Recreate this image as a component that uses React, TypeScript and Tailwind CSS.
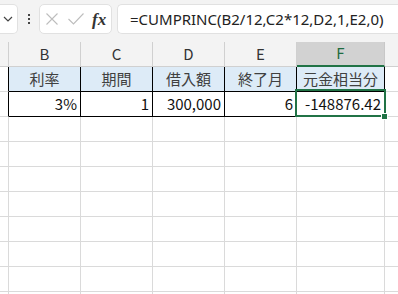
import React from "react";

const font = '"Noto Sans CJK JP", "Noto Sans", sans-serif';

const cols = [9, 72, 72, 72, 72, 88, 14];
const letters = ["", "B", "C", "D", "E", "F", ""];

export default function App() {
  const rows = Array.from({ length: 10 }, (_, i) => i);
  return (
    <div className="w-[398px] h-[294px] overflow-hidden bg-white" style={{ fontFamily: font }}>
      {/* toolbar */}
      <div className="h-[42px] bg-[#f3f3f3] flex items-start pt-[4px]">
        <div className="w-[18px] h-[30px] bg-white border-y border-r border-[#e1e1e1] rounded-r-[5px] flex items-center pl-[3px]">
          <svg width="10" height="6" viewBox="0 0 10 6"><path d="M1 1 L5 5 L9 1" stroke="#444" strokeWidth="1.2" fill="none" /></svg>
        </div>
        <div className="w-[21px] h-[30px] flex flex-col items-center justify-center gap-[2px]">
          <div className="w-[2px] h-[2px] bg-[#444]" />
          <div className="w-[2px] h-[2px] bg-[#444]" />
          <div className="w-[2px] h-[2px] bg-[#444]" />
        </div>
        <div className="w-[73px] h-[30px] bg-white border border-[#e1e1e1] rounded-[5px] flex items-center">
          <svg className="ml-[6px]" width="12" height="12" viewBox="0 0 12 12"><path d="M0.5 0.5 L11.5 11.5 M11.5 0.5 L0.5 11.5" stroke="#bdbdbd" strokeWidth="1.1" fill="none" /></svg>
          <svg className="ml-[10px]" width="16" height="12" viewBox="0 0 16 12"><path d="M0.5 6 L5.5 11 L15.5 0.5" stroke="#bdbdbd" strokeWidth="1.1" fill="none" /></svg>
          <span className="ml-[8px] text-[17px] italic font-bold text-[#333] leading-none" style={{ fontFamily: '"Liberation Serif", serif' }}>fx</span>
        </div>
        <div className="ml-[5px] flex-1 h-[30px] bg-white border-y border-l border-[#e1e1e1] rounded-l-[5px] flex items-center pl-[12px]">
          <span className="text-[15px] text-[#222] whitespace-nowrap" style={{ fontFamily: '"Noto Sans", sans-serif' }}>=CUMPRINC(B2/12,C2*12,D2,1,E2,0)</span>
        </div>
      </div>
      {/* column headers */}
      <div className="flex h-[25px] bg-[#f3f3f3]">
        {cols.map((w, i) => (
          <div
            key={i}
            style={{ width: w }}
            className={
              "shrink-0 h-[25px] flex items-center justify-center text-[15px] border-r " +
              (i === 5
                ? "bg-[#d2d2d2] text-[#1e6b3f] border-b-2 border-b-[#217346] border-r-[#c8c8c8]"
                : "text-[#333] border-r-[#d0d0d0] border-b border-b-[#d0d0d0]")
            }
          >
            {letters[i]}
          </div>
        ))}
      </div>
      {/* grid */}
      <div className="relative">
        {rows.map((r) => (
          <div key={r} className="flex h-[25px]">
            {cols.map((w, c) => {
              const inTable = r < 2 && c >= 1 && c <= 5;
              const leftOfTable = r < 2 && c === 0;
              const header = r === 0 && inTable;
              const rightBorder = inTable || leftOfTable ? "border-r-black" : "border-r-[#dadada]";
              const bottomBorder = inTable ? "border-b-black" : "border-b-[#dadada]";
              let content: React.ReactNode = null;
              if (r === 0) content = ["", "利率", "期間", "借入額", "終了月", "元金相当分", ""][c];
              if (r === 1) content = ["", "3%", "1", "300,000", "6", "-148876.42", ""][c];
              return (
                <div
                  key={c}
                  style={{ width: w }}
                  className={
                    "shrink-0 h-[25px] border-r border-b flex items-center text-[15px] px-[3px] whitespace-nowrap " +
                    rightBorder +
                    " " +
                    bottomBorder +
                    " " +
                    (header ? "bg-[#ddebf7] justify-center text-[#404040] " : "justify-end text-[#111] ")
                  }
                >
                  {content}
                </div>
              );
            })}
          </div>
        ))}
        {/* selection */}
        <div className="absolute left-[295px] top-[22px] w-[91px] h-[28px] border-2 border-[#217346]" />
        <div className="absolute left-[381px] top-[46px] w-[7px] h-[7px] bg-[#217346] border border-white" />
      </div>
    </div>
  );
}
